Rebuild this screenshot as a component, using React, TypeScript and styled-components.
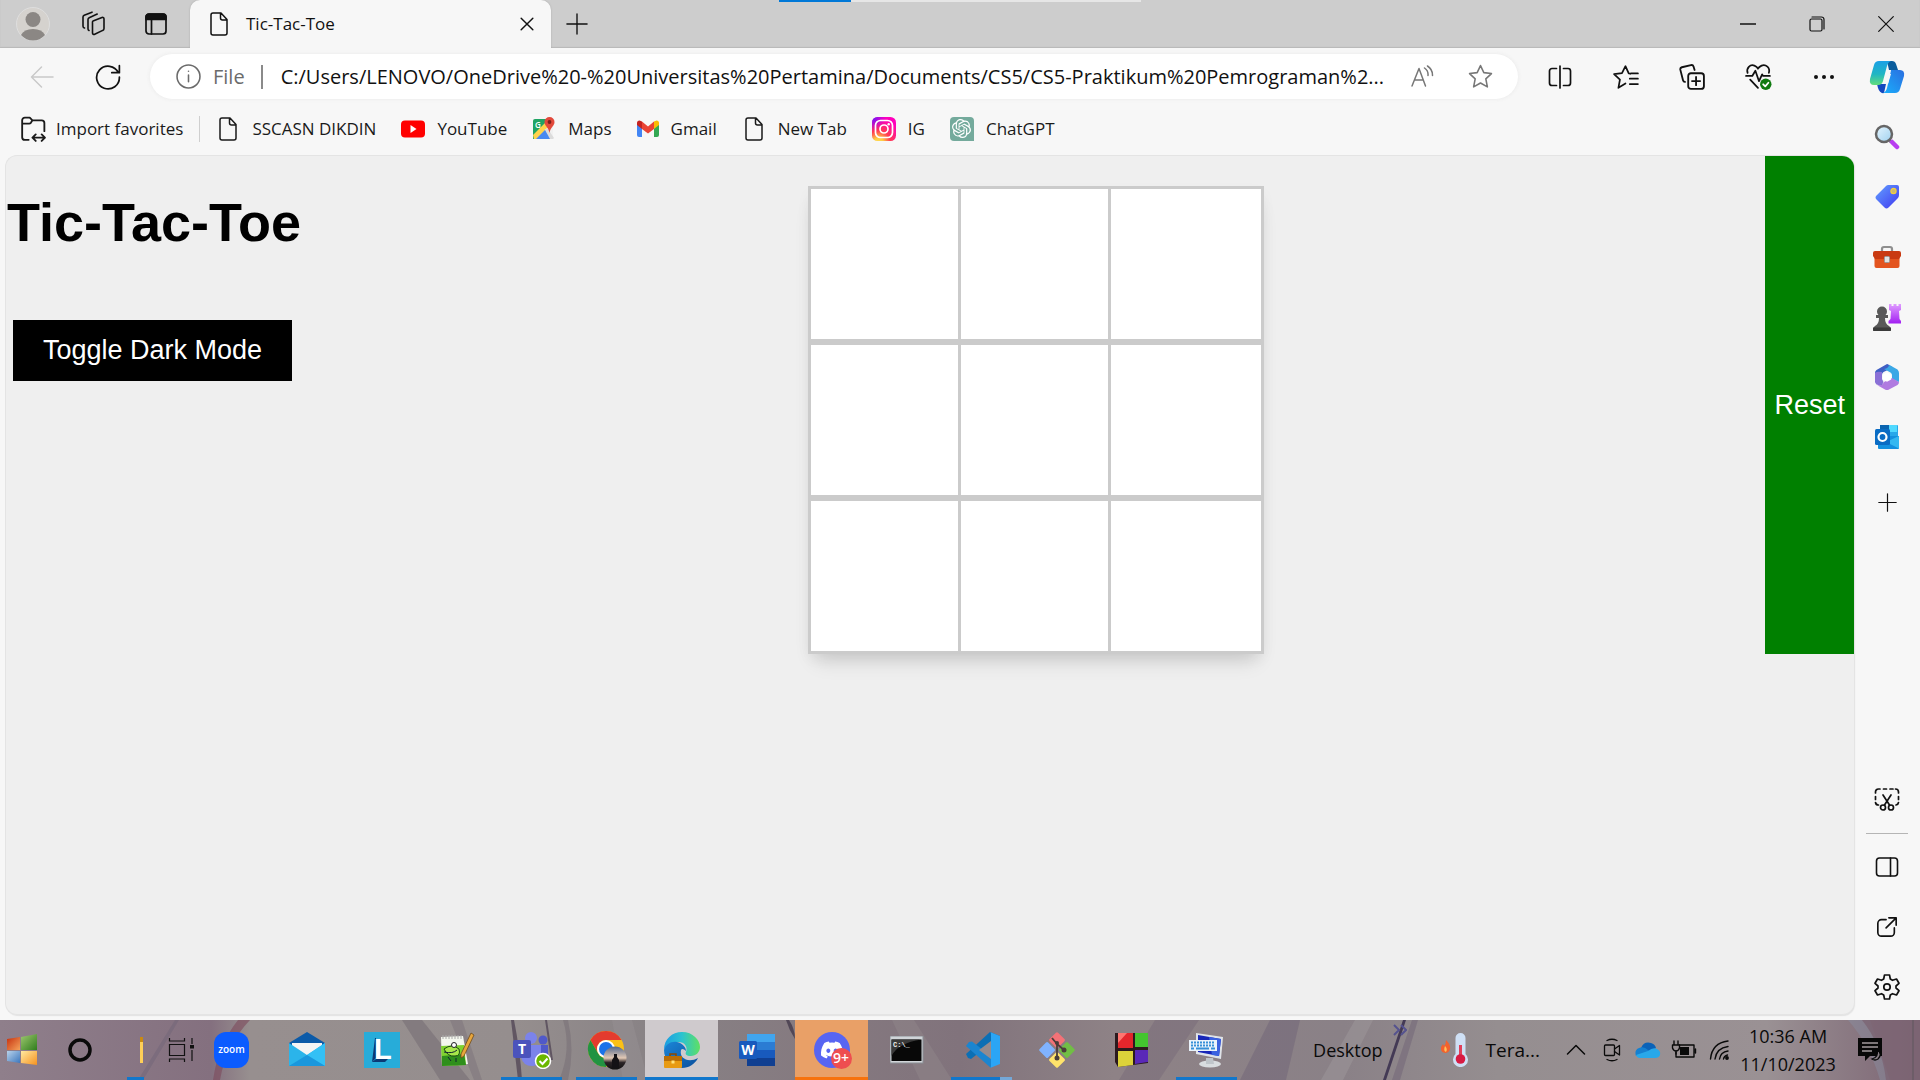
import React, { useState } from "react";
import styled, { createGlobalStyle } from "styled-components";
import { FaDiscord } from "react-icons/fa";
import { SiOpenai } from "react-icons/si";

const uiFont = '"Open Sans", "Noto Sans", sans-serif';
const pageFont = '"Liberation Sans", Arial, sans-serif';

const GlobalStyle = createGlobalStyle`
  *, *::before, *::after { box-sizing: border-box; }
  body { margin: 0; font-family: ${uiFont}; color: #111; background: #f7f7f7; }
  button, input { font: inherit; color: inherit; }
  button { border: 0; padding: 0; background: none; cursor: pointer; }
  svg { display: block; flex: none; }
`;

/* ---------- window frame ---------- */

const Screen = styled.div`
  display: flex;
  flex-direction: column;
  min-height: 100vh;
`;

const TitleBar = styled.header`
  position: relative;
  display: flex;
  height: 48px;
  background: #cdcdcd;
  box-shadow: inset 0 -1px 1px #b9b9b9;
`;

const TitleTools = styled.div`
  display: flex;
  align-items: center;
  gap: 14px;
  width: 190px;
  padding-left: 9px;
`;

const IconButton = styled.button<{ $w?: number; $color?: string }>`
  display: flex;
  align-items: center;
  justify-content: center;
  flex: none;
  width: ${(p) => p.$w ?? 48}px;
  height: 48px;
  color: ${(p) => p.$color ?? "#111"};
`;

const Tab = styled.div`
  display: flex;
  align-items: center;
  width: 361px;
  padding: 0 0 0 17px;
  border-radius: 10px 10px 0 0;
  background: #f7f7f7;
  box-shadow: 0 0 2px #a8a8a8;
  clip-path: inset(0 -3px 0 -3px);
`;

const TabTitle = styled.span`
  flex: 1;
  margin-left: 15px;
  font-size: 17px;
  line-height: 24px;
`;

const WindowControls = styled.div`
  display: flex;
  margin-left: auto;
`;

const LoadStrip = styled.div`
  position: absolute;
  top: 0;
  left: 779px;
  width: 362px;
  height: 2px;
  background: linear-gradient(to right, #0078d7 20%, #e6e6e6 20%);
`;

const Body = styled.div`
  display: flex;
  flex: 1;
  background: #f7f7f7;
`;

const Main = styled.div`
  display: flex;
  flex-direction: column;
  flex: 1;
  min-width: 0;
`;

const Toolbar = styled.div`
  display: flex;
  align-items: center;
  gap: 18px;
  height: 58px;
  padding: 0 6px 1px 18px;
`;

const AddressBar = styled.div`
  display: flex;
  align-items: center;
  flex: 1;
  min-width: 0;
  height: 45px;
  padding: 0 14px 0 26px;
  border-radius: 23px;
  background: #fff;
  box-shadow: 0 0 4px #e9e9e9;
`;

const Scheme = styled.label`
  margin-left: 12px;
  padding-right: 16px;
  border-right: 2px solid #8a8a8a;
  color: #6b6b6b;
  font-size: 20px;
  line-height: 24px;
`;

const UrlInput = styled.input`
  flex: 1;
  min-width: 0;
  padding: 0 0 0 18px;
  border: 0;
  outline: 0;
  background: none;
  font-size: 20px;
  line-height: 28px;
`;

const AddressActions = styled.div`
  display: flex;
  gap: 10px;
`;

const Favorites = styled.nav`
  display: flex;
  align-items: center;
  gap: 25px;
  height: 49px;
  padding: 0 20px 4px;
`;

const Favorite = styled.a<{ $divided?: boolean }>`
  display: flex;
  align-items: center;
  gap: 12px;
  color: #1a1a1a;
  font-size: 17px;
  line-height: 24px;
  text-decoration: none;
  white-space: nowrap;
  ${(p) =>
    p.$divided &&
    "gap: 10px; padding-right: 16px; margin-right: -9px; border-right: 1px solid #cfcfcf;"}
`;

/* ---------- sidebar ---------- */

const Sidebar = styled.aside`
  display: flex;
  flex-direction: column;
  align-items: center;
  width: 66px;
  padding: 5px 0 9px;
`;

const SideGroup = styled.div`
  display: flex;
  flex-direction: column;
  gap: 12px;
`;

const SideTop = styled(SideGroup)`
  & > :last-child { margin-top: 5px; }
`;

const SideBottom = styled(SideGroup)`
  margin-top: auto;
`;

const SideRule = styled.hr`
  width: 42px;
  margin: -3px 0;
  border: 0;
  border-top: 1px solid #b5b5b5;
  align-self: center;
`;

/* ---------- web page ---------- */

const Page = styled.main`
  flex: 1;
  margin: 0 0 5px 5px;
  border: 1px solid #e4e4e4;
  border-right: 0;
  border-radius: 12px;
  background: #efefef;
  box-shadow: 1px 1px 1px #e2e2e2;
  font-family: ${pageFont};
  overflow: hidden;
`;

const Game = styled.section`
  display: flex;
  justify-content: space-between;
`;

const Intro = styled.div`
  width: 301px;
`;

const Heading = styled.h1`
  margin: 35px 0 67px 1px;
  color: #000;
  font-size: 54px;
  line-height: 62px;
  white-space: nowrap;
`;

const ToggleButton = styled.button`
  margin-left: 7px;
  padding: 15px 30px;
  background: #000;
  color: #fff;
  font-size: 27px;
  line-height: 31px;
  white-space: nowrap;
`;

const Board = styled.div`
  margin-top: 30px;
  box-shadow: 0 14px 20px -8px rgba(0, 0, 0, 0.14), 0 6px 14px -2px rgba(0, 0, 0, 0.06);
`;

const BoardRow = styled.div`
  display: flex;
`;

const Cell = styled.button`
  width: 156px;
  height: 156px;
  margin-right: -6px;
  border: 3px solid #cbcbcb;
  background: #fff;
  font-size: 84px;
  &:last-child { margin-right: 0; }
`;

const ResetButton = styled.button`
  padding: 0 9px;
  background: #008000;
  color: #fff;
  font-size: 27px;
`;

/* ---------- taskbar ---------- */

const Taskbar = styled.footer`
  position: relative;
  display: flex;
  height: 60px;
  background: #938a8d;
  isolation: isolate;
  overflow: hidden;
`;

const Wallpaper = styled.svg`
  position: absolute;
  inset: 0;
  z-index: -1;
  width: 100%;
  height: 100%;
`;

const TaskGroup = styled.div`
  display: flex;
  gap: 2px;
`;

const barFill: Record<string, string> = {
  blue: "linear-gradient(#1177cc, #1177cc)",
  stacked: "linear-gradient(to right, #1177cc 80%, #74a8d8 80%)",
};

const Task = styled.button<{ $w?: number; $bar?: "blue" | "stacked"; $bg?: string; $edge?: string }>`
  display: flex;
  align-items: center;
  justify-content: center;
  flex: none;
  width: ${(p) => p.$w ?? 73}px;
  height: 60px;
  background: ${(p) => (p.$bar ? `${barFill[p.$bar]} center bottom / 61px 3px no-repeat` : p.$bg ?? "none")};
  box-shadow: ${(p) => (p.$edge ? `inset 0 -3px ${p.$edge}` : "none")};
`;

const FolderTask = styled(Task)`
  background: linear-gradient(#1177cc, #1177cc) 11px bottom / 17px 3px no-repeat;
`;

const Tray = styled.div`
  display: flex;
  margin-left: auto;
  color: #0a0a0a;
`;

const DesktopBar = styled.button`
  display: flex;
  align-items: center;
  gap: 10px;
  padding-right: 34px;
  font-size: 18px;
  svg { align-self: flex-start; margin-top: 3px; }
`;

const Weather = styled.button`
  display: flex;
  align-items: center;
  gap: 17px;
  padding-right: 18px;
  font-size: 19px;
`;

const Clock = styled.button`
  width: 100px;
  font-size: 18px;
  line-height: 28px;
  time { display: block; }
`;

const ShowDesktop = styled.button`
  width: 8px;
  margin-left: 10px;
  border-left: 2px solid #6d5d68;
`;

/* ---------- icons ---------- */

type IconProps = { w?: number; h?: number; sw?: number; box?: string; children: React.ReactNode };

const Line = ({ w = 24, h = w, sw = 1.5, box = "0 0 24 24", children }: IconProps) => (
  <svg width={w} height={h} viewBox={box} fill="none" stroke="currentColor" strokeWidth={sw}
    strokeLinecap="round" strokeLinejoin="round" aria-hidden="true">{children}</svg>
);

const Art = ({ w = 36, h = w, box = "0 0 36 36", children }: IconProps) => (
  <svg width={w} height={h} viewBox={box} aria-hidden="true">{children}</svg>
);

const DocIcon = () => (
  <Line><path d="M6 1h8l6 6.500v13.500a2 2 0 0 1-2 2H6a2 2 0 0 1-2-2V3a2 2 0 0 1 2-2zM13.500 1v5a2 2 0 0 0 2 2H20" /></Line>
);
const PlusIcon = ({ w = 22 }: { w?: number }) => <Line w={w}><path d="M12 1v22M1 12h22" /></Line>;
const AvatarIcon = () => (
  <Art w={34} box="0 0 34 34">
    <circle cx="17" cy="17" r="16.500" fill="#d5d2ce" stroke="#dedede" />
    <circle cx="17" cy="12.500" r="7.500" fill="#8b8784" />
    <path d="M5 28q3-6 12-6t12 6q-5 5.500-12 5.500T5 28z" fill="#8b8784" />
  </Art>
);
const WorkspaceIcon = () => (
  <Line w={26} box="0 0 26 26" sw={1.6}>
    <path d="M13 10l9-3.500a1.500 1.500 0 0 1 2 1.500v9.500a2 2 0 0 1-1.300 1.900l-8 3.900a1.500 1.500 0 0 1-2.200-1.300V12a2 2 0 0 1 .5-2z" />
    <path d="M9 19.500a2 2 0 0 1-1-1.800V8.500A2 2 0 0 1 9.200 6.700l8-3.700M4.500 17A2 2 0 0 1 3 15.200V6a2 2 0 0 1 1.200-1.800L12 1.200" />
  </Line>
);
const TabMenuIcon = () => (
  <Line w={24} sw={1.700}>
    <rect x="2" y="2" width="20" height="20" rx="3" /><path d="M2 7.500V5a3 3 0 0 1 3-3h14a3 3 0 0 1 3 3v2.500z" fill="currentColor" /><path d="M7.500 8v14" />
  </Line>
);
const BackIcon = () => <Line><path d="M23 12H1.500M11.500 2L1.500 12l10 10" /></Line>;
const ReloadIcon = () => (
  <Line w={26} sw={1.600}><path d="M21.500 8A10.500 10.500 0 1 0 22.500 12M22.500 1.500V8h-7" /></Line>
);
const ReadAloudIcon = () => (
  <Line><path d="M2 21L9 3.500 15.500 21M4.500 15h8.500M14.500 3a8 8 0 0 1 3.500 7.500M17.500 1a11 11 0 0 1 5 9.500" /></Line>
);
const starPath = "M12 1.500l3.200 6.800 7.300.9-5.400 5.100 1.500 7.700L12 18.200 5.400 22l1.500-7.700L1.500 9.200l7.300-.9z";
const StarIcon = () => <Line w={25}><path d={starPath} /></Line>;
const SplitIcon = () => (
  <Line sw={1.700}><path d="M12 1v22M8.500 3.500H4a2.500 2.500 0 0 0-2.500 2.500v12A2.500 2.500 0 0 0 4 20.500h4.500M15.500 3.500H20a2.500 2.500 0 0 1 2.500 2.500v12a2.500 2.500 0 0 1-2.500 2.500h-4.500" /></Line>
);
const StarListIcon = () => (
  <Line w={26} sw={1.600}><path d="M16 9l-1.500-.3L11.500 2 8.300 8.500l-7.300.9 5.400 5.100L5 22l6.500-4M16.500 8.700H23M15.500 13.500H23M15.500 18.500H23" /></Line>
);
const CollectionsIcon = () => (
  <Line w={26} sw={1.700}>
    <rect x="8.500" y="8.500" width="14.500" height="14.500" rx="2.500" /><path d="M15.750 12v7.500M12 15.750h7.500" />
    <path d="M5.500 16.500a2 2 0 0 1-1.800-1.500L1.200 5.200A2 2 0 0 1 2.600 3L11 1a2 2 0 0 1 2.400 1.300l1 3.200" />
  </Line>
);
const HealthIcon = () => (
  <Line w={27} box="0 0 26 26" sw={1.700}>
    <path d="M2.500 9.500C1 5 5 1 9 2.500q2.500 1 3.500 3 1-2 3.500-3c4-1.500 8.500 2 7 7M5 16l7.500 8M1 12.500h6l3-5 3.500 10 3-6.500 1 1.500H24" />
    <circle cx="20" cy="20.500" r="5.500" fill="#0f7b10" stroke="none" />
    <path d="M17.500 20.500l2 2 3-3.500" stroke="#fff" />
  </Line>
);
const DotsIcon = () => (
  <Art w={22} h={6} box="0 0 22 6"><g fill="#111"><circle cx="3" cy="3" r="2" /><circle cx="11" cy="3" r="2" /><circle cx="19" cy="3" r="2" /></g></Art>
);
const CopilotIcon = () => (
  <Art w={36} h={34} box="0 0 36 34">
    <defs>
      <linearGradient id="cpA" x1="0" y1="0" x2="0" y2="1"><stop stopColor="#1aa0e6" /><stop offset=".55" stopColor="#21b6c3" /><stop offset="1" stopColor="#62dd7b" /></linearGradient>
      <linearGradient id="cpB" x1="1" y1="0" x2="0" y2="1"><stop stopColor="#2a6fe0" /><stop offset="1" stopColor="#1aaefc" /></linearGradient>
    </defs>
    <path d="M18 1h5q3 0 4 3l2 6h-9z" fill="#0a5c9c" />
    <path d="M8 24h9l-2 9q-4 1-6-5z" fill="#1448c0" />
    <path d="M10 1h12q-3 1-4 5l-4 15q-1 4-5 4H5q-5 0-4-6L5 5q1-4 5-4z" fill="url(#cpA)" />
    <path d="M22 10h9q5 0 4 6l-4 13q-1 4-5 4H14q3-1 4-5l3-13q1-4 1-5z" fill="url(#cpB)" />
    <path d="M19 14h3l-3 10h-4z" fill="#f7f7f7" />
  </Art>
);
const ImportIcon = () => (
  <Line w={26} sw={1.700}><path d="M8 22H4.500A2.500 2.500 0 0 1 2 19.500V4a2.500 2.500 0 0 1 2.500-2.500H9L11.500 4H20a2.500 2.500 0 0 1 2.500 2.500V14M2 7h6.500a2 2 0 0 0 1.500-.7L11.500 4M12 20h11M14.500 17l-3 3 3 3M20 17l3 3-3 3" /></Line>
);
const YoutubeIcon = () => (
  <Art w={24} box="0 0 24 24"><rect y="3.500" width="24" height="17" rx="4" fill="#f00" /><path d="M9.500 8v8l6-4z" fill="#fff" /></Art>
);
const MapsIcon = () => (
  <Art w={24} box="0 0 24 24">
    <rect x="1" y="2" width="20" height="20" rx="2" fill="#f1f1f1" />
    <path d="M1 4q0-2 2-2h12v7L3 22H1z" fill="#1fa463" /><path d="M2 22L13 11l7 11z" fill="#4989f2" /><path d="M1 18L15 4l3 4L4 22H2z" fill="#ffd34c" />
    <path d="M12.500 12l3.500 0 6 9-1 1h-3z" fill="#dcdcdc" />
    <path d="M17.500 0a5 5 0 0 1 5 5c0 4-4 5-5 11-1-6-5-7-5-11a5 5 0 0 1 5-5z" fill="#e2493b" /><circle cx="17.500" cy="5" r="1.900" fill="#7d1f18" />
    <text x="3" y="11" fontFamily={uiFont} fontSize="8" fontWeight="600" fill="#fff">G</text>
  </Art>
);
const GmailIcon = () => (
  <Art w={22} h={24} box="0 0 22 24">
    <path d="M0 6v12q0 2 2 2h3V9z" fill="#4285f4" /><path d="M22 6v12q0 2-2 2h-3V9z" fill="#34a853" />
    <path d="M5 4.500l6 5 6-5V12l-6 4.500L5 12z" fill="#ea4335" /><path d="M0 6q0-2.500 2.500-2.500L5 4.500V12L0 8z" fill="#c5221f" /><path d="M22 6q0-2.500-2.500-2.500L17 4.500V12l5-4z" fill="#fbbc04" />
  </Art>
);
const InstagramIcon = () => (
  <Art w={24} box="0 0 24 24">
    <defs>
      <radialGradient id="igA" cx=".27" cy="1.070" r="1"><stop stopColor="#fd5" /><stop offset=".2" stopColor="#fc4" /><stop offset=".5" stopColor="#ff3a52" /><stop offset="1" stopColor="#f0b" /></radialGradient>
      <radialGradient id="igB" cx="0" cy="0" r=".6"><stop stopColor="#4a20ff" /><stop offset="1" stopColor="#90f" stopOpacity="0" /></radialGradient>
    </defs>
    <rect width="24" height="24" rx="5.500" fill="url(#igA)" /><rect width="24" height="24" rx="5.500" fill="url(#igB)" />
    <g fill="none" stroke="#fff" strokeWidth="1.700"><rect x="3.500" y="3.500" width="17" height="17" rx="5" /><circle cx="12" cy="12" r="4" /></g><circle cx="16.700" cy="7.300" r="1.200" fill="#fff" />
  </Art>
);

const GptBadge = styled.span`
  display: flex;
  align-items: center;
  justify-content: center;
  width: 24px;
  height: 24px;
  border-radius: 4px 4px 0 4px;
  background: #74aa9c;
  color: #fff;
`;

const SearchArt = () => (
  <Art w={26} box="0 0 26 26">
    <defs><linearGradient id="glass" x1="0" y1="0" x2="1" y2="1"><stop stopColor="#e6f6ff" /><stop offset="1" stopColor="#9fd0ee" /></linearGradient></defs>
    <path d="M14 15l3 3" stroke="#777" strokeWidth="3" /><path d="M18 18l5 5" stroke="#b83df0" strokeWidth="4.500" strokeLinecap="round" />
    <circle cx="10" cy="10" r="8" fill="url(#glass)" stroke="#666" strokeWidth="2.500" />
  </Art>
);
const TagArt = () => (
  <Art w={26} box="0 0 26 26">
    <defs><linearGradient id="tag" x1="0" y1="0" x2="1" y2="1"><stop stopColor="#62a0ff" /><stop offset="1" stopColor="#4038f0" /></linearGradient></defs>
    <path d="M14 1h9q2 0 2 2v8q0 2-1.500 3.500l-9 9q-2 2-4 0l-8-8q-2-2 0-4l9-9Q12.500 1 14 1z" fill="url(#tag)" />
    <circle cx="19.500" cy="7" r="2.600" fill="#cdbb6c" stroke="#f6cf3d" strokeWidth="1.200" />
  </Art>
);
const ToolboxArt = () => (
  <Art w={28} h={24} box="0 0 28 24">
    <path d="M9 8V4q0-2 2-2h6q2 0 2 2v4" fill="none" stroke="#8f8f8f" strokeWidth="2.200" />
    <rect x="1.500" y="11" width="25" height="12" rx="2" fill="#e3541f" /><path d="M2 6h24q2 0 2 2v3l-2 3H2l-2-3V8q0-2 2-2z" fill="#c93a12" />
    <rect x="11.500" y="11.500" width="5" height="6" rx="1" fill="#e2e2e2" stroke="#9a9a9a" />
  </Art>
);
const ChessArt = () => (
  <Art w={28} box="0 0 28 28">
    <defs><linearGradient id="rook" x1="0" y1="0" x2="0" y2="1"><stop stopColor="#df9cff" /><stop offset="1" stopColor="#a21ff2" /></linearGradient></defs>
    <path d="M16 1h2.500v2h2V1h3v2h2V1H28v6l-2 1 .5 8 1.500 2v2.500H15.500V18l2-2 .5-8-2-1z" fill="url(#rook)" />
    <g fill="#595959"><circle cx="9" cy="8.500" r="5" /><path d="M3 12h12v3H12q0 6 4 8l2 2v2q0 1-1 1H1q-1 0-1-1v-2l2-2q4-2 4-8H3z" /></g>
    <rect y="24.500" width="18" height="3.500" rx="1" fill="#3b3b3b" />
  </Art>
);
const M365Art = () => (
  <Art w={26} box="0 0 26 26">
    <path d="M13 0L2.500 6Q1 7 1 9v9l7 4V11q0-2 1.500-3L19 3.500 15 1q-1-1-2-1z" fill="#3f5fc4" />
    <path d="M15 .7L23.500 5.500Q25 7 25 9v9l-7-3v-4q0-1.500-1.500-2.500L10 5q5-1 5-4.300z" fill="#3ba8e6" />
    <path d="M25 11v7q0 2-1.500 3L15 25.500q-2 1-4 0L3 21q5 1 7-3l3-1.500 5-2.500 7 4z" fill="#b07be0" />
    <path d="M1 9v8q0 2 1.500 3.500Q8 23 9.500 18L8 15V8q-5-1-7 1z" fill="#8a70d6" /><path d="M13 8.200l4.200 2.400v4.800L13 17.800l-4.200-2.400v-4.800z" fill="#fff" />
  </Art>
);
const OutlookArt = () => (
  <Art w={26} box="0 0 26 26">
    <rect x="6" y="1" width="18" height="14" rx="1" fill="#28a8ea" /><path d="M6 1h9v7H6z" fill="#0a64b0" /><path d="M15 1h8v7h-8z" fill="#50d9ff" />
    <path d="M4 12h21v12q0 1-1 1H5q-1 0-1-1z" fill="#1490df" /><path d="M25 12v12.500L12 18z" fill="#35b8f1" />
    <rect x="1" y="5" width="15" height="16" rx="1.500" fill="#0a6cc4" /><circle cx="8.500" cy="13" r="4" fill="none" stroke="#fff" strokeWidth="2.200" />
  </Art>
);
const SnipIcon = () => (
  <Line w={26} box="0 0 26 26" sw={1.700}>
    <path d="M1.500 6V5a3 3 0 0 1 3-3H6M9.500 2h3M16 2h3M21.500 2a3 3 0 0 1 3 3v1M24.500 9.500v3M24.500 15.500a3 3 0 0 1-2.500 2.500M1.500 9.500v3M1.500 15.500A3 3 0 0 0 4.500 18" />
    <path d="M9 8l6.500 10M17 8l-6.500 10" /><circle cx="9" cy="20.500" r="2.500" /><circle cx="17" cy="20.500" r="2.500" />
  </Line>
);
const PanelIcon = () => <Line sw={1.600}><rect x="1.500" y="3" width="21" height="18" rx="3" /><path d="M15.500 3v18" /></Line>;
const OpenIcon = () => (
  <Line w={22} sw={1.800}><path d="M11 4H6a4 4 0 0 0-4 4v10a4 4 0 0 0 4 4h10a4 4 0 0 0 4-4v-5M11 13L22 2M14 2h8v8" /></Line>
);
const GearIcon = () => (
  <Line w={28} box="0 0 28 28" sw={1.700}>
    <path d="M11.500 2h5l.8 4 2.200 1.300L23.500 6l2.500 4.300L23 13v2l3 2.700-2.500 4.300-4-1.300-2.200 1.300-.8 4h-5l-.8-4-2.200-1.300L4.500 22 2 17.700 5 15v-2l-3-2.700L4.500 6l4 1.300L10.700 6z" /><circle cx="14" cy="14" r="3.200" />
  </Line>
);

/* taskbar drawings */
const StartArt = () => (
  <Art w={32} box="0 0 32 32">
    <defs>
      <linearGradient id="wr" x1="0" y1="0" x2="1" y2="1"><stop stopColor="#c5300f" /><stop offset="1" stopColor="#f5a25a" /></linearGradient>
      <linearGradient id="wg" x1="0" y1="0" x2="1" y2="1"><stop stopColor="#9fc870" /><stop offset="1" stopColor="#2f7d1d" /></linearGradient>
      <linearGradient id="wb" x1="0" y1="0" x2="1" y2="1"><stop stopColor="#b8d2ea" /><stop offset="1" stopColor="#3c77bd" /></linearGradient>
      <linearGradient id="wy" x1="0" y1="0" x2="1" y2="1"><stop stopColor="#ffe9a0" /><stop offset="1" stopColor="#f6921e" /></linearGradient>
    </defs>
    <path d="M1 5l13-2v13H1z" fill="url(#wr)" /><path d="M15 3l16-3v16H15z" fill="url(#wg)" /><path d="M1 17h13v12L1 27z" fill="url(#wb)" /><path d="M15 17h16v14l-16-2z" fill="url(#wy)" />
  </Art>
);
const CortanaArt = () => <Art w={26} box="0 0 26 26"><circle cx="13" cy="13" r="10" fill="none" stroke="#0a0a0a" strokeWidth="3.500" /></Art>;
const FolderSliver = () => <Art w={3} h={26} box="0 0 3 26"><rect width="3" height="26" fill="#ffcf57" /><rect width="3" height="5" fill="#c98a12" /></Art>;
const TaskViewArt = () => (
  <Art w={26} box="0 0 26 26"><path d="M1.500 1v3h15V1M1.500 25v-3h15v3M1.500 7.500h15v11h-15zM24 1v6M24 13v11" fill="none" stroke="#111" strokeWidth="1.200" /><rect x="22" y="8" width="4" height="3.500" fill="#111" /></Art>
);
const ZoomArt = () => (
  <Art><rect width="35" height="36" rx="12" fill="#0b5cff" /><text x="17.500" y="21" textAnchor="middle" fontFamily={uiFont} fontWeight="600" fontSize="10" fill="#fff">zoom</text></Art>
);
const MailArt = () => (
  <Art><path d="M0 11L18 0l18 11v6H0z" fill="#0b5aa8" /><path d="M3 11h30v14H3z" fill="#f4f4f4" /><path d="M0 11l18 12L36 11v23H0z" fill="#2bb4ea" /><path d="M18 23L36 11v23z" fill="#33c0f5" /><path d="M18 23l18 11H0z" fill="#1a97dd" /></Art>
);
const LArt = () => (
  <Art>
    <rect width="36" height="36" fill="#27acd9" /><path d="M12 6v20l-4 4 3-24z" fill="#0b3a75" /><path d="M8 30l4-3h12l-3 3z" fill="#0b3a75" />
    <text x="10" y="27" fontFamily={pageFont} fontSize="29" fontWeight="700" fill="#fff">L</text>
  </Art>
);
const NotepadArt = () => (
  <Art>
    <path d="M2 5l22-1 5 28-26 2z" fill="#f4f7ee" /><path d="M2 14l23-1 2 20-24 1z" fill="#7fd22f" /><path d="M3 24l22-2 2 11-24 1z" fill="#2f8f1c" />
    <path d="M4 3v4M7 3v4M10 3v4M13 3v4M16 3v4M19 3v4M22 3v4" stroke="#aaa" /><path d="M5 17q8-6 15 0 2 7-4 7-7 1-11-7z" fill="#a8e84a" stroke="#1a4a10" /><circle cx="15" cy="13" r="2.500" fill="#fff" stroke="#222" /><path d="M5 20q9 2 13-2M9 25l3 4M17 26v4" stroke="#123" fill="none" />
    <path d="M32 1l3 2-10 21-3 2 0-4z" fill="#e8a63c" stroke="#6d4a1c" strokeWidth=".8" />
  </Art>
);
const TeamsArt = () => (
  <Art w={40} h={38} box="0 0 40 38">
    <circle cx="19" cy="7" r="6" fill="#7b83eb" /><circle cx="31" cy="9" r="4.500" fill="#5059c9" /><path d="M22 14h14v12q-1 7-7 7h-7z" fill="#5059c9" /><path d="M9 14h20v13q-1 8-9 8-9 0-11-9z" fill="#7b83eb" />
    <rect x="1" y="9" width="18" height="18" rx="2" fill="#4b53bc" /><text x="10" y="23" textAnchor="middle" fontFamily={uiFont} fontSize="14" fontWeight="700" fill="#fff">T</text>
    <circle cx="31" cy="30" r="7.500" fill="#6bb700" stroke="#fff" strokeWidth="1.500" /><path d="M27.500 30l3 3 5-5.500" fill="none" stroke="#fff" strokeWidth="2" />
  </Art>
);
const ChromeArt = () => (
  <Art w={40} h={40} box="0 0 40 40">
    <circle cx="19" cy="19" r="18" fill="#fbc116" /><path d="M3.400 10A18 18 0 0 1 34.600 10H19a9 9 0 0 0-7.800 13.500z" fill="#e33b2e" /><path d="M3.400 10A18 18 0 0 0 19 37l7.800-13.500a9 9 0 0 1-15.600 0z" fill="#229342" />
    <circle cx="19" cy="19" r="9" fill="#fff" /><circle cx="19" cy="19" r="7" fill="#1a73e8" />
    <defs><linearGradient id="dusk" x1="0" y1="0" x2="0" y2="1"><stop stopColor="#52688c" /><stop offset=".5" stopColor="#e3c9b5" /><stop offset=".7" stopColor="#2a2326" /><stop offset="1" stopColor="#111" /></linearGradient></defs>
    <circle cx="28" cy="28" r="11.500" fill="url(#dusk)" /><path d="M25 38v-8l2-3v-3h3v3l2 3v8z" fill="#141216" />
  </Art>
);
const EdgeArt = () => (
  <Art>
    <defs>
      <linearGradient id="edA" x1="0" y1="0" x2="1" y2="0"><stop stopColor="#1b9de2" /><stop offset=".5" stopColor="#2cc3d0" /><stop offset="1" stopColor="#5fe062" /></linearGradient>
      <linearGradient id="edB" x1="0" y1="0" x2="1" y2="1"><stop stopColor="#1b86d8" /><stop offset="1" stopColor="#0c4f9c" /></linearGradient>
    </defs>
    <path d="M0 18C0 7 8 0 18 0c11 0 18 8 18 15 0 5-4 9-9 9-5 0-6-2-5-4 2-5-1-10-8-10C7 10 2 13 0 18z" fill="url(#edA)" />
    <path d="M0 18c2-6 7-9 13-8 5 1 9 5 9 9-2-2-4-3-5-1-2 9 8 13 17 8-3 6-9 10-16 10C8 36 0 28 0 18z" fill="url(#edB)" />
    <rect y="24" width="18" height="12" rx="1" fill="#e89a12" /><path d="M0 24h18v5H0z" fill="#b86d05" /><path d="M6 24v-2h6v2" fill="none" stroke="#8a4a00" strokeWidth="1.500" /><rect x="7.500" y="28.500" width="3" height="3" fill="#ffe27a" />
  </Art>
);
const WordArt = () => (
  <Art>
    <rect x="8" y="2" width="28" height="8" fill="#41a5ee" /><rect x="8" y="10" width="28" height="8" fill="#2b7cd3" /><rect x="8" y="18" width="28" height="8" fill="#185abd" /><rect x="8" y="26" width="28" height="8" fill="#103f91" />
    <rect y="9" width="18" height="18" rx="1.500" fill="#185abd" /><text x="9" y="23" textAnchor="middle" fontFamily={uiFont} fontSize="14" fontWeight="700" fill="#fff">W</text>
  </Art>
);

const DiscordBadge = styled.span`
  position: relative;
  display: flex;
  align-items: center;
  justify-content: center;
  width: 36px;
  height: 36px;
  border-radius: 18px;
  background: #5865f2;
  color: #fff;
`;
const Count = styled.span`
  position: absolute;
  left: 17px;
  top: 16px;
  width: 21px;
  height: 21px;
  border-radius: 11px;
  background: #ee4e50;
  font-size: 14px;
  font-weight: 600;
  line-height: 20px;
  text-align: center;
`;

const CmdArt = () => (
  <Art w={34} h={28} box="0 0 34 28">
    <rect width="33" height="27" fill="#d0d4d8" stroke="#8a8f95" /><rect x="1.500" y="3.500" width="30" height="21.500" fill="#080808" /><path d="M1.500 3.500h30Q8 7 1.500 20z" fill="#3a3a3a" />
    <text x="3" y="11" fontFamily='"Liberation Mono", monospace' fontSize="7" fontWeight="700" fill="#eee">{"C:\\_"}</text>
  </Art>
);
const CodeArt = () => (
  <Art><path d="M26 0L2 22l2 4 3 1L36 4z" fill="#0b6fb5" /><path d="M2 14l3-4 3-.5L27 24v12L2 14z" fill="#1b85d0" /><path d="M26 0l10 4v28l-10 4q1 0 1-2V2q0-2-1-2z" fill="#2ba5f5" /><path d="M27 9L15 18l12 9z" fill="#948b8e" /></Art>
);
const GitArt = () => (
  <Art>
    <g transform="rotate(45 18 18)"><rect x="5" y="5" width="12" height="12" rx="1.500" fill="#f37277" /><rect x="19" y="5" width="12" height="12" rx="1.500" fill="#71be45" /><rect x="5" y="19" width="12" height="12" rx="1.500" fill="#80b3ff" /><rect x="19" y="19" width="12" height="12" rx="1.500" fill="#ffe36b" /></g>
    <path d="M13 6l5 6v14M18 12l7 6" fill="none" stroke="#4a3d3a" strokeWidth="1.800" /><g fill="#4a3d3a"><circle cx="18" cy="11" r="2" /><circle cx="25" cy="18" r="2.500" /><circle cx="18" cy="26" r="2.500" /></g>
  </Art>
);
const BlocksArt = () => (
  <Art><path d="M1 1l33 0v30L4 35 1 30z" fill="#2b1a1e" /><path d="M4 1h15v15H4z" fill="#e3262c" /><path d="M21 1h13v14H21z" fill="#43c52f" /><path d="M4 19h15v14l-15 2z" fill="#dcd23a" /><path d="M21 18h13v12l-13 2z" fill="#5a28b8" /><path d="M4 1h9l-9 10z" fill="#ff7570" /></Art>
);
const KeyboardArt = () => (
  <Art>
    <ellipse cx="21" cy="32" rx="11" ry="3.500" fill="#d9dde0" /><path d="M17 26h7l1 6h-8z" fill="#bfc5ca" /><path d="M7 1l27 4-2 22L7 22z" fill="#dfe3e8" /><path d="M9 3l23 4-2 17L9 20z" fill="#1726b8" /><path d="M20 5l12 2-2 17-7-1z" fill="#3b62e0" />
    <rect x="0" y="8" width="28" height="11" fill="#eaf3fb" /><path d="M2 10.500h24M2 13.500h24" stroke="#3690d8" strokeWidth="2" strokeDasharray="2 1" /><path d="M2 16.500h3m2 0h13m2 0h4" stroke="#3690d8" strokeWidth="2" />
  </Art>
);
const ThermoArt = () => (
  <Art w={28} h={34} box="0 0 28 34">
    <path d="M5 7q5 5 4 9-1 4-5 4-5-1-4-6l2-3 1 2q2-2 2-6z" fill="#f2622e" /><path d="M4 13q3 3 1 6-3-1-1-6z" fill="#ffc15a" />
    <path d="M14.500 5a5 5 0 0 1 10 0v16a7.500 7.500 0 1 1-10 0z" fill="#cfe0f5" /><path d="M18 12h3v11h-3z" fill="#e0405a" /><circle cx="19.500" cy="26" r="4.800" fill="#d81b43" />
  </Art>
);
const CloudArt = () => (
  <Art w={26} h={18} box="0 0 26 18"><path d="M6 7q3-7 10-5 4 1 5 5l-8 6z" fill="#0a62b8" /><path d="M1 15q-2-6 3-8 5-2 9 2l8 5z" fill="#1580d0" /><path d="M13 10q5-4 9-2 4 2 3 6-1 3-5 3H5q-3 0-4-3z" fill="#28a8ea" /></Art>
);
const CameraIcon = () => (
  <Line w={18} h={24} box="0 0 18 24" sw={1.300}><path d="M4 2.500q5-2.500 10 0M4 21.500q5 2.500 10 0" /><rect x="1.500" y="7" width="10" height="10.500" rx="1" /><path d="M11.500 11l5-3.500v9.500l-5-3.500" /></Line>
);
const BatteryIcon = () => (
  <Line w={26} h={22} box="0 0 26 22" sw={1.400}><path d="M8.500 6H23v12H5v-5M24.500 10v4" /><path d="M3 2v4M7 2v4M1.500 6h7v3q-1 3-3.500 3t-3.500-3zM5 12v3" /><rect x="9" y="8" width="9" height="8" fill="currentColor" stroke="none" /></Line>
);
const WifiIcon = () => (
  <Line w={22} box="0 0 22 22" sw={1.400}><path d="M1.500 20Q3 4 19 2M6 20Q7.500 9 19 7.500M10.500 20q1-7 8.500-8" /><path d="M14.500 20q.5-3 4-4" /><circle cx="18" cy="19" r="1.200" fill="currentColor" /></Line>
);
const NoticeIcon = () => (
  <Art w={26} box="0 0 26 26"><path d="M1 1h24v18H13l-5 5v-5H1z" fill="#080808" /><path d="M5 6h16M5 10h16M5 14h10" stroke="#a29a9d" strokeWidth="1.300" /><path d="M20 13q6 4 1 9-3 2-6 0 7-2 5-9z" fill="#8a7f86" stroke="#080808" strokeWidth="1.300" /></Art>
);

const Backdrop = () => (
  <Wallpaper viewBox="0 0 1920 60" preserveAspectRatio="none" aria-hidden="true">
    <defs>
      <linearGradient id="wall" x1="0" x2="1" y1="0" y2="0">
        <stop stopColor="#8f7f8b" /><stop offset=".11" stopColor="#84707f" /><stop offset=".13" stopColor="#978f8f" /><stop offset=".27" stopColor="#958e8e" /><stop offset=".34" stopColor="#888285" />
        <stop offset=".42" stopColor="#857a80" /><stop offset=".5" stopColor="#81737c" /><stop offset=".58" stopColor="#8e8286" /><stop offset=".7" stopColor="#8a8187" /><stop offset=".78" stopColor="#958e90" /><stop offset=".92" stopColor="#9a9194" /><stop offset="1" stopColor="#7c6473" />
      </linearGradient>
    </defs>
    <rect width="1920" height="60" fill="url(#wall)" />
    <path d="M175 0h4l-36 60h-5z" fill="#75677a" opacity=".6" /><path d="M238 0h12q-24 25-30 60h-7q5-35 25-60z" fill="#7d4a5c" opacity=".6" />
    <path d="M402 0h20l48 60h-30z" fill="#6d646d" opacity=".45" /><path d="M450 0h12l20 60h-8z" fill="#7b7279" opacity=".5" />
    <path d="M511 0h3q6 30 8 60h-4zM545 0h2l6 40h-2z" fill="#45394c" opacity=".65" /><path d="M563 0q9 30-4 60h9q7-30 0-60z" fill="#6d646d" opacity=".4" /><path d="M612 0h20l16 60h-25z" fill="#9b9598" opacity=".35" />
    <path d="M786 0h3q6 9 6 19-6-9-9-19z" fill="#3b3245" opacity=".7" /><path d="M892 0h22l38 60h-32z" fill="#8f868a" opacity=".5" />
    <path d="M1155 0h44l-40 60h-40z" fill="#7b6e7b" opacity=".6" /><path d="M1270 0h30l-14 60h-46z" fill="#75697a" opacity=".6" /><path d="M1355 0h18l-30 60h-22z" fill="#9b9598" opacity=".6" />
    <path d="M1403 0h3l-20 60h-3z" fill="#443a55" /><path d="M1412 0h6l-18 60h-8z" fill="#75697a" opacity=".6" />
    <path d="M1848 0h22l20 60h-10q-10-35-32-60z" fill="#8a93a8" opacity=".4" /><path d="M1862 0h60v60h-36q-4-35-24-60z" fill="#7c6473" opacity=".8" />
  </Wallpaper>
);

/* ---------- data ---------- */

const favorites = [
  { label: "Import favorites", icon: <ImportIcon />, divided: true },
  { label: "SSCASN DIKDIN", icon: <DocIcon /> },
  { label: "YouTube", icon: <YoutubeIcon /> },
  { label: "Maps", icon: <MapsIcon /> },
  { label: "Gmail", icon: <GmailIcon /> },
  { label: "New Tab", icon: <DocIcon /> },
  { label: "IG", icon: <InstagramIcon /> },
  { label: "ChatGPT", icon: <GptBadge><SiOpenai size={19} /></GptBadge> },
];

const toolbarIcons = [
  { label: "Split screen", icon: <SplitIcon /> },
  { label: "Favorites", icon: <StarListIcon /> },
  { label: "Collections", icon: <CollectionsIcon /> },
  { label: "Browser essentials", icon: <HealthIcon /> },
  { label: "Settings and more", icon: <DotsIcon /> },
];

const sideIcons = [
  { label: "Copilot", icon: <CopilotIcon /> },
  { label: "Search", icon: <SearchArt /> },
  { label: "Shopping", icon: <TagArt /> },
  { label: "Tools", icon: <ToolboxArt /> },
  { label: "Games", icon: <ChessArt /> },
  { label: "Microsoft 365", icon: <M365Art /> },
  { label: "Outlook", icon: <OutlookArt /> },
  { label: "Customize", icon: <PlusIcon w={19} /> },
];

type TaskItem = { label: string; icon: React.ReactNode; bar?: "blue" | "stacked"; bg?: string; edge?: string };
const tasks: TaskItem[] = [
  { label: "Zoom", icon: <ZoomArt /> },
  { label: "Mail", icon: <MailArt /> },
  { label: "L", icon: <LArt /> },
  { label: "Notepad++", icon: <NotepadArt /> },
  { label: "Teams", icon: <TeamsArt />, bar: "blue" },
  { label: "Chrome", icon: <ChromeArt />, bar: "blue" },
  { label: "Edge", icon: <EdgeArt />, bg: "#cfcacd", edge: "#1177cc" },
  { label: "Word", icon: <WordArt /> },
  { label: "Discord", icon: <DiscordBadge><FaDiscord size={24} /><Count>9+</Count></DiscordBadge>, bg: "#e9a067", edge: "#f7720c" },
  { label: "Command Prompt", icon: <CmdArt /> },
  { label: "VS Code", icon: <CodeArt />, bar: "stacked" },
  { label: "Git", icon: <GitArt /> },
  { label: "Code::Blocks", icon: <BlocksArt /> },
  { label: "On-screen keyboard", icon: <KeyboardArt />, bar: "blue" },
];

const trayIcons = [
  { label: "Show hidden icons", icon: <Line w={20} box="0 0 20 20"><path d="M1.500 14L10 5.500l8.500 8.500" /></Line> },
  { label: "Meet Now", icon: <CameraIcon /> },
  { label: "OneDrive", icon: <CloudArt /> },
  { label: "Battery", icon: <BatteryIcon /> },
  { label: "Network", icon: <WifiIcon /> },
];

const emptyBoard = Array<string>(9).fill("");

export default function App() {
  const [cells, setCells] = useState(emptyBoard);
  const [dark, setDark] = useState(false);
  const play = (i: number) =>
    setCells((c) => (c[i] ? c : c.map((v, k) => (k === i ? (c.filter(Boolean).length % 2 ? "O" : "X") : v))));

  return (
    <Screen>
      <GlobalStyle />
      <TitleBar>
        <TitleTools>
          <IconButton aria-label="Profile"><AvatarIcon /></IconButton>
          <IconButton aria-label="Workspaces" $w={44}><WorkspaceIcon /></IconButton>
          <IconButton aria-label="Tab actions" $w={54}><TabMenuIcon /></IconButton>
        </TitleTools>
        <Tab>
          <DocIcon />
          <TabTitle>Tic-Tac-Toe</TabTitle>
          <IconButton aria-label="Close tab"><Line w={14}><path d="M2 2l20 20M22 2L2 22" strokeWidth="2.500" /></Line></IconButton>
        </Tab>
        <IconButton $w={52} aria-label="New tab"><PlusIcon /></IconButton>
        <LoadStrip />
        <WindowControls>
          <IconButton $w={69} aria-label="Minimize"><Line w={16} box="0 0 16 16"><path d="M0 8h16" /></Line></IconButton>
          <IconButton $w={69} aria-label="Restore"><Line w={16} box="0 0 16 16" sw={1.200}><rect x="1" y="3" width="12" height="12" rx="1.500" /><path d="M3 1h9.500a2.500 2.500 0 0 1 2.500 2.500V13" /></Line></IconButton>
          <IconButton $w={69} aria-label="Close"><Line w={16} box="0 0 16 16" sw={1.200}><path d="M.7.700l14.600 14.600M15.300.700L.7 15.300" /></Line></IconButton>
        </WindowControls>
      </TitleBar>

      <Body>
        <Main>
          <Toolbar>
            <IconButton aria-label="Back" $color="#c9c9c9"><BackIcon /></IconButton>
            <IconButton aria-label="Refresh"><ReloadIcon /></IconButton>
            <AddressBar>
              <Line w={25}><g stroke="#6b6b6b"><circle cx="12" cy="12" r="11" /><path d="M12 10.500v6.500M12 7v0" /></g></Line>
              <Scheme htmlFor="address">File</Scheme>
              <UrlInput id="address" readOnly value="C:/Users/LENOVO/OneDrive%20-%20Universitas%20Pertamina/Documents/CS5/CS5-Praktikum%20Pemrograman%2..." />
              <AddressActions>
                <IconButton aria-label="Read aloud" $color="#777"><ReadAloudIcon /></IconButton>
                <IconButton aria-label="Add to favorites" $color="#777"><StarIcon /></IconButton>
              </AddressActions>
            </AddressBar>
            {toolbarIcons.map((t) => <IconButton key={t.label} aria-label={t.label}>{t.icon}</IconButton>)}
          </Toolbar>
          <Favorites>
            {favorites.map((f) => <Favorite key={f.label} href="#" $divided={f.divided}>{f.icon}{f.label}</Favorite>)}
          </Favorites>
          <Page style={dark ? { background: "#222" } : undefined}>
            <Game>
              <Intro>
                <Heading>Tic-Tac-Toe</Heading>
                <ToggleButton onClick={() => setDark(!dark)}>Toggle Dark Mode</ToggleButton>
              </Intro>
              <Board>
                {[0, 3, 6].map((row) => (
                  <BoardRow key={row}>
                    {[row, row + 1, row + 2].map((i) => (
                      <Cell key={i} aria-label={`Cell ${i + 1}`} onClick={() => play(i)}>{cells[i]}</Cell>
                    ))}
                  </BoardRow>
                ))}
              </Board>
              <ResetButton onClick={() => setCells(emptyBoard)}>Reset</ResetButton>
            </Game>
          </Page>
        </Main>
        <Sidebar>
          <SideTop>
            {sideIcons.map((s) => <IconButton key={s.label} aria-label={s.label}>{s.icon}</IconButton>)}
          </SideTop>
          <SideBottom>
            <IconButton aria-label="Screenshot"><SnipIcon /></IconButton>
            <SideRule />
            <IconButton aria-label="Hide sidebar"><PanelIcon /></IconButton>
            <IconButton aria-label="Open link"><OpenIcon /></IconButton>
            <IconButton aria-label="Settings"><GearIcon /></IconButton>
          </SideBottom>
        </Sidebar>
      </Body>

      <Taskbar>
        <Backdrop />
        <Task $w={44} aria-label="Start"><StartArt /></Task>
        <Task $w={72} aria-label="Cortana"><CortanaArt /></Task>
        <FolderTask $w={51} aria-label="File Explorer"><FolderSliver /></FolderTask>
        <Task $w={28} aria-label="Task View"><TaskViewArt /></Task>
        <TaskGroup>
          {tasks.map((t) => <Task key={t.label} aria-label={t.label} $bar={t.bar} $bg={t.bg} $edge={t.edge}>{t.icon}</Task>)}
        </TaskGroup>
        <Tray>
          <DesktopBar>
            Desktop
            <svg width="14" height="14" viewBox="0 0 14 14" fill="none" stroke="#55528f" strokeWidth="2" aria-hidden="true"><path d="M1 2l5 5-5 5M8 2l5 5-5 5" /></svg>
          </DesktopBar>
          <Weather><ThermoArt />Tera...</Weather>
          {trayIcons.map((t) => <Task key={t.label} $w={36} aria-label={t.label}>{t.icon}</Task>)}
          <Clock><time>10:36 AM</time><time>11/10/2023</time></Clock>
          <Task $w={64} aria-label="Notifications"><NoticeIcon /></Task>
          <ShowDesktop aria-label="Show desktop" />
        </Tray>
      </Taskbar>
    </Screen>
  );
}
